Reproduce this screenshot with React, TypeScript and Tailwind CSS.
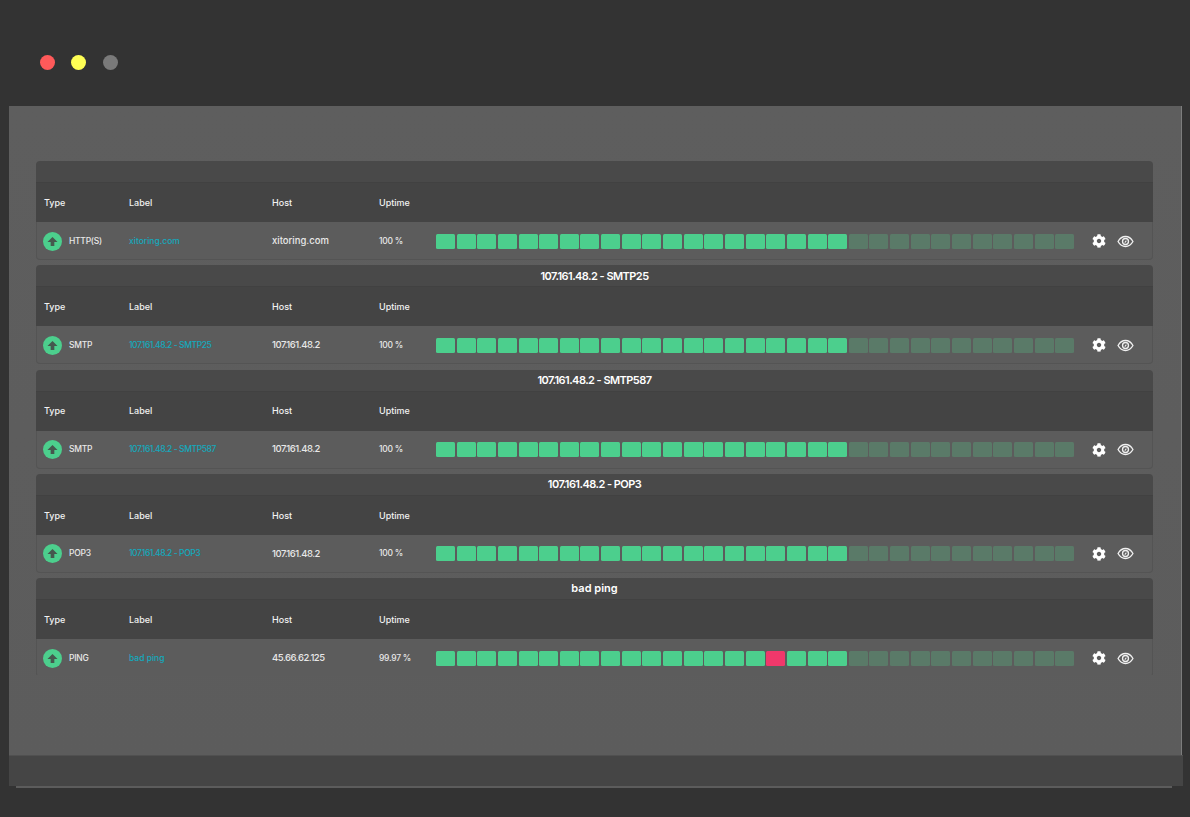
import { FaCog } from "react-icons/fa";

type Monitor = {
  title: string;
  type: string;
  label: string;
  host: string;
  uptime: string;
  down?: number;
};

const monitors: Monitor[] = [
  { title: "", type: "HTTP(S)", label: "xitoring.com", host: "xitoring.com", uptime: "100 %" },
  { title: "107.161.48.2 - SMTP25", type: "SMTP", label: "107.161.48.2 - SMTP25", host: "107.161.48.2", uptime: "100 %" },
  { title: "107.161.48.2 - SMTP587", type: "SMTP", label: "107.161.48.2 - SMTP587", host: "107.161.48.2", uptime: "100 %" },
  { title: "107.161.48.2 - POP3", type: "POP3", label: "107.161.48.2 - POP3", host: "107.161.48.2", uptime: "100 %" },
  { title: "bad ping", type: "PING", label: "bad ping", host: "45.66.62.125", uptime: "99.97 %", down: 16 },
];

const columns = "grid grid-cols-[85px_143px_107px_57px_1fr] items-center pl-[7px]";

// the digits of the installed font run wider than the ones in the picture
function numeric(text: string) {
  return /^\d/.test(text) ? "tracking-[-0.05em]" : "";
}

function Beats({ down }: { down?: number }) {
  return (
    <div className="flex gap-[1.65px]">
      {Array.from({ length: 31 }).map((_, i) => {
        let color = "bg-[#5a7a68]";
        if (i < 20) color = "bg-[#4ccf8d]";
        if (i === down) color = "bg-[#f0386b]";
        return <div key={i} className={`w-[19px] h-[15px] rounded-[1.5px] ${color}`} />;
      })}
    </div>
  );
}

function EyeIcon() {
  return (
    <svg width="17" height="17" viewBox="0 0 24 24" fill="none" stroke="#f0f0f0" className="ml-[11px]">
      <path d="M1.5 12C4 7.5 7.6 5 12 5s8 2.5 10.5 7c-2.5 4.500-6.100 7-10.500 7S4 16.500 1.500 12Z" strokeWidth="1.900" />
      <circle cx="12" cy="12" r="4.200" strokeWidth="1.900" />
      <path d="M11 13.500 13.200 10.800" strokeWidth="1.500" />
    </svg>
  );
}

function MonitorCard({ monitor }: { monitor: Monitor }) {
  return (
    <div className="shrink-0 rounded-[4px]">
      <div className={`h-[22px] rounded-t-[4px] bg-[#494949] border-b border-[#414141] flex items-center justify-center text-[11px] font-semibold text-white ${numeric(monitor.title)}`}>
        {monitor.title}
      </div>
      <div className={`${columns} pl-[8px] h-[39px] bg-[#444444] text-[9px] font-medium text-[#f2f2f2]`}>
        <div>Type</div>
        <div>Label</div>
        <div>Host</div>
        <div>Uptime</div>
      </div>
      <div className={`${columns} h-[38px] pt-[1px] bg-[#5c5c5c] border-x border-b border-[#545454] rounded-b-[4px] text-[8.500px] font-medium text-[#e8e8e8]`}>
        <div className="flex items-center gap-[7px] -ml-[1px]">
          <div className="w-[19px] h-[19px] rounded-full bg-[#4ccf8d] flex items-center justify-center">
            <svg width="11" height="11" viewBox="0 0 24 24" fill="#45584e">
              <path d="M12 2 23 13H16V22H8V13H1Z" />
            </svg>
          </div>
          <span className="tracking-[-0.03em]">{monitor.type}</span>
        </div>
        <div className={`text-[#14a9bd] ${numeric(monitor.label)}`}>{monitor.label}</div>
        <div className={`text-[9.500px] ${numeric(monitor.host)}`}>{monitor.host}</div>
        <div className="tracking-[-0.03em]">{monitor.uptime}</div>
        <div className="flex items-center">
          <Beats down={monitor.down} />
          <FaCog size={14} className="ml-[18px] text-white" />
          <EyeIcon />
        </div>
      </div>
    </div>
  );
}

export default function App() {
  return (
    <div className="h-[817px] overflow-hidden bg-[#333333] font-['Inter','Liberation_Sans',sans-serif]">
      <div className="h-[106px] flex gap-[16.500px] pl-[39.500px] pt-[55px]">
        <div className="w-[15px] h-[15px] rounded-full bg-[#ff5a5a]" />
        <div className="w-[15px] h-[15px] rounded-full bg-[#ffff55]" />
        <div className="w-[15px] h-[15px] rounded-full bg-[#7a7a7a]" />
      </div>
      <div className="ml-[9px] w-[1173px] h-[649px] bg-gradient-to-b from-[#5e5e5e] to-[#5c5c5c] border-r border-[#7d7d7d] pl-[27px] pr-[28px] pt-[55px]">
        <div className="h-[514px] overflow-hidden flex flex-col gap-[5.250px]">
          {monitors.map((m, i) => (
            <MonitorCard key={i} monitor={m} />
          ))}
        </div>
      </div>
      <div className="ml-[9px] w-[1174px] h-[31px] bg-[#454545] border-t border-[#505050]" />
      <div className="ml-[16px] w-[1156px] h-[2px] bg-[#5c5c5c]" />
    </div>
  );
}
